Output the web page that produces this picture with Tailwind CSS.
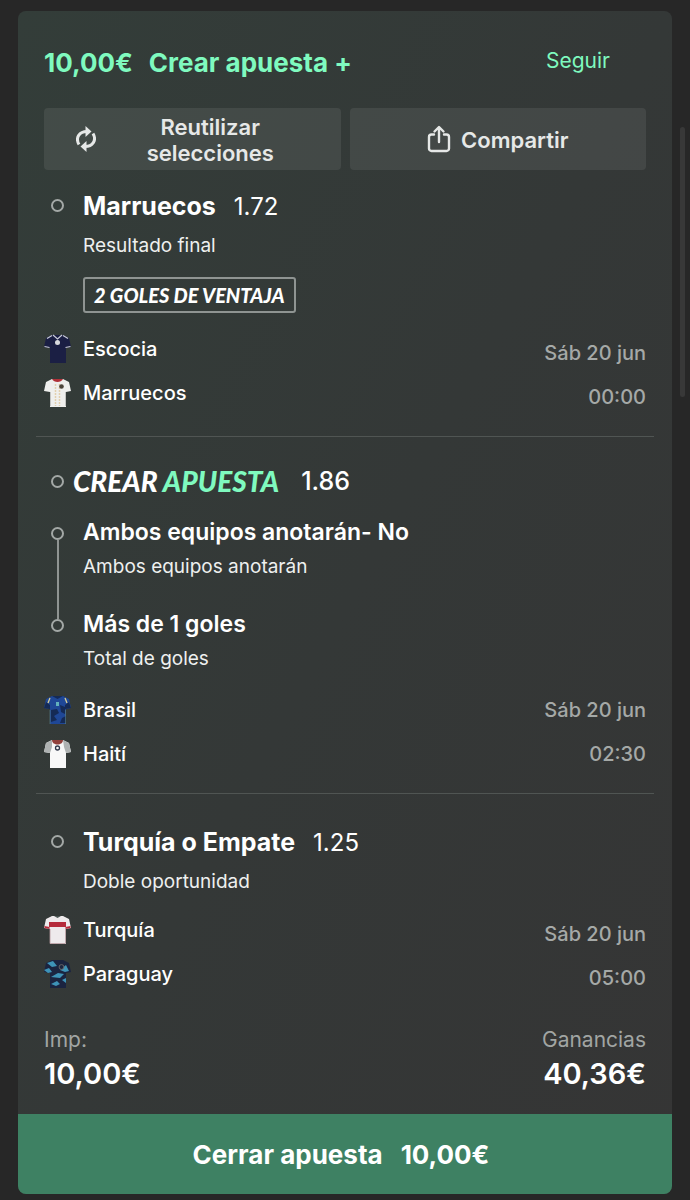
<!DOCTYPE html>
<html lang="es">
<head>
    <meta charset="UTF-8">
    <meta name="viewport" content="width=device-width, initial-scale=1.0">
    <title>Mis apuestas</title>
    <script src="https://cdn.jsdelivr.net/npm/@tailwindcss/browser@4"></script>
</head>
<body class="relative min-h-screen bg-[#272727] px-[18px] pt-[11px] pb-[6px] font-['Inter','Liberation_Sans',sans-serif] text-white">

    <!-- Scroll indicator -->
    <div class="absolute top-[127px] right-[5px] h-[270px] w-[5px] rounded-full bg-[#383838]"></div>

    <main class="overflow-hidden rounded-lg bg-linear-to-br from-[#333d39] via-[#343837] to-[#353535]">
        <div class="px-[26px]">

            <!-- Header -->
            <header class="flex h-[97px] items-center justify-between pt-[6px] pr-9">
                <h1 class="flex gap-4 text-[26px] font-bold text-[#7ffabf]"><span>10,00€</span><span>Crear apuesta +</span></h1>
                <button type="button" class="pb-1 text-[21px] text-[#7ffabf]">Seguir</button>
            </header>

            <div class="grid grid-cols-2 gap-[9px] text-[22px] leading-[26px] font-semibold text-[#e6e8e7]">
                <button type="button" class="flex h-[62px] items-center rounded bg-white/8 pr-11 pl-8">
                    <svg class="h-7 w-5 shrink-0" viewBox="0 0 20 28" fill="none" stroke="currentColor" stroke-width="3">
                        <path d="M3 19.500C-1 12.500 3.500 6.500 11 6.500"/>
                        <path d="M17 8.500C21 15.500 16.500 21.500 9 21.500"/>
                        <path d="M9.500 1l6 5.500-6 5.500z" fill="currentColor" stroke="none"/>
                        <path d="M10.500 16l-6 5.500 6 5.500z" fill="currentColor" stroke="none"/>
                    </svg>
                    <span class="flex-1 pt-[2px] pl-7">Reutilizar selecciones</span>
                </button>
                <button type="button" class="flex h-[62px] items-center justify-center gap-[10px] rounded bg-white/8">
                    <svg class="h-7 w-6" viewBox="0 0 24 28" fill="none" stroke="currentColor" stroke-width="2.400" stroke-linecap="round" stroke-linejoin="round">
                        <path d="M7 9.500H4.500a2.500 2.500 0 0 0-2.500 2.500v11.500A2.500 2.500 0 0 0 4.500 26h15a2.500 2.500 0 0 0 2.500-2.500V12a2.500 2.500 0 0 0-2.500-2.500H17"/>
                        <path d="M12 17V2.500M7.500 6.500L12 2l4.500 4.500"/>
                    </svg>
                    <span class="pt-[2px]">Compartir</span>
                </button>
            </div>

            <!-- Leg 1 -->
            <section class="pt-[19px] pb-[17px]">
                <div class="flex h-9 items-center">
                    <span class="mb-1 ml-[7px] size-[13px] rounded-full border-2 border-[#a3a8a6]"></span>
                    <h2 class="ml-[19px] text-[25px] font-bold">Marruecos</h2>
                    <span class="ml-[18px] text-[24px]">1.72</span>
                </div>
                <p class="mt-[9px] ml-[39px] text-[19px] leading-6 text-[#eef0ef]">Resultado final</p>
                <div class="mt-[19px] ml-[39px] flex h-9 w-fit items-center rounded-[3px] border-2 border-[#8f9492] px-[9px] font-['Lato_Black','Lato',sans-serif] text-[20px] font-black italic">2 GOLES DE VENTAJA</div>
                <div class="mt-[14px] flex justify-between text-[20px] font-medium">
                    <ul>
                        <li class="flex h-11 items-center gap-3">
                            <svg class="h-[30px] w-[27px]" viewBox="0 0 27 30">
                                <path d="M8 1h11l6 3 2 9-5 1v15H6V14l-6-1 2-9z" fill="#1b1f44"/>
                                <path d="M8 1.500L3 4.500M19 1.500l5 3M.5 12.500l5 1M26.500 12.500l-5 1M9 1l4.500 4L18 1" fill="none" stroke="#c9cbd8" stroke-width="1.200"/>
                                <circle cx="13.500" cy="8.500" r="2.500" fill="#d9dade"/>
                            </svg>
                            Escocia
                        </li>
                        <li class="flex h-11 items-center gap-3">
                            <svg class="h-[30px] w-[27px]" viewBox="0 0 27 30">
                                <path d="M8 1h11l6 3 2 9-5 1v15H6V14l-6-1 2-9z" fill="#efefed"/>
                                <path d="M8 1h11c-2 4-9 4-11 0z" fill="#b03038"/>
                                <path d="M11.500 6v22M15.500 6v22" stroke="#e2cfae" stroke-width="1.500" stroke-dasharray="2 1"/>
                                <path d="M6.500 14v14M21.500 14v14" stroke="#c4c4c2"/>
                                <circle cx="17.500" cy="8.500" r="2.300" fill="#4b443a"/>
                            </svg>
                            Marruecos
                        </li>
                    </ul>
                    <div class="mt-1 text-right text-[#a5a9a7]">
                        <p class="leading-[44px]">Sáb 20 jun</p>
                        <p class="leading-[44px]">00:00</p>
                    </div>
                </div>
            </section>

            <hr class="-mx-2 border-[#505553]">

            <!-- Leg 2 -->
            <section class="pt-[26px] pb-[17px]">
                <div class="flex h-9 items-center">
                    <span class="ml-[7px] size-[13px] rounded-full border-2 border-[#a3a8a6]"></span>
                    <h2 class="ml-[9px] font-['Lato_Black','Lato',sans-serif] text-[28px] font-black italic">CREAR <span class="text-[#7ffabf]">APUESTA</span></h2>
                    <span class="ml-[22px] pt-[2px] text-[25px] font-medium">1.86</span>
                </div>
                <div class="mt-[19px] flex">
                    <!-- Joined markers -->
                    <div class="ml-[7px] flex w-[13px] flex-col items-center pt-[9px] pb-[39px]">
                        <span class="size-[13px] rounded-full border-2 border-[#a3a8a6]"></span>
                        <span class="w-[2px] flex-1 bg-[#8f9492]"></span>
                        <span class="size-[13px] rounded-full border-2 border-[#a3a8a6]"></span>
                    </div>
                    <div class="ml-[19px]">
                        <h3 class="text-[23px] leading-7 font-semibold">Ambos equipos anotarán- No</h3>
                        <p class="mt-[9px] text-[19px] leading-6 text-[#eef0ef]">Ambos equipos anotarán</p>
                        <h3 class="mt-[31px] text-[23px] leading-7 font-semibold">Más de 1 goles</h3>
                        <p class="mt-[9px] text-[19px] leading-6 text-[#eef0ef]">Total de goles</p>
                    </div>
                </div>
                <div class="mt-[17px] flex justify-between text-[20px] font-medium">
                    <ul>
                        <li class="flex h-11 items-center gap-3">
                            <svg class="h-[30px] w-[27px]" viewBox="0 0 27 30">
                                <path d="M8 1h11l6 3 2 9-5 1v15H6V14l-6-1 2-9z" fill="#1f4796"/>
                                <path d="M8 1h11l-5.500 3zM0 13l2-6 4 3v4zM27 13l-2-6-4 3v4zM7 15l6-1 2 4-5 3 3 4-6 2zM16 10l5 2v7l-4-2zM18 23l4-2v7h-6z" fill="#152a55"/>
                                <path d="M6 3L4 8M21 3l2 5" stroke="#d8cf95" stroke-width="1.300"/>
                                <path d="M12 7h3v4h-3z" fill="#63b1bd"/>
                                <path d="M6 15v14M21.500 15v14" stroke="#537a83" stroke-width=".7"/>
                            </svg>
                            Brasil
                        </li>
                        <li class="flex h-11 items-center gap-3">
                            <svg class="h-[30px] w-[27px]" viewBox="0 0 27 30">
                                <path d="M8 1h11l6 3 2 9-5 1v15H6V14l-6-1 2-9z" fill="#f8f8f8"/>
                                <path d="M8 1L2 4l-2 9 6 1 2-6zM19 1l6 3 2 9-5 1-2-6z" fill="#aeb2b2"/>
                                <path d="M8 1h11c0 6-11 6-11 0z" fill="#91403b"/>
                                <circle cx="13.500" cy="9" r="2" fill="none" stroke="#30384a" stroke-width="1.300"/>
                            </svg>
                            Haití
                        </li>
                    </ul>
                    <div class="text-right text-[#a5a9a7]">
                        <p class="leading-[44px]">Sáb 20 jun</p>
                        <p class="leading-[44px]">02:30</p>
                    </div>
                </div>
            </section>

            <hr class="-mx-2 border-[#505553]">

            <!-- Leg 3 -->
            <section class="pt-[31px] pb-7">
                <div class="flex h-9 items-center">
                    <span class="mb-1 ml-[7px] size-[13px] rounded-full border-2 border-[#a3a8a6]"></span>
                    <h2 class="ml-[19px] text-[25px] font-bold">Turquía o Empate</h2>
                    <span class="ml-[18px] text-[24px]">1.25</span>
                </div>
                <p class="mt-[9px] ml-[39px] text-[19px] leading-6 text-[#eef0ef]">Doble oportunidad</p>
                <div class="mt-[14px] flex justify-between text-[20px] font-medium">
                    <ul>
                        <li class="flex h-11 items-center gap-3">
                            <svg class="h-[30px] w-[27px]" viewBox="0 0 27 30">
                                <path d="M8 1h11l6 3 2 9-5 1v15H6V14l-6-1 2-9z" fill="#eeeaec"/>
                                <path d="M5 7h17v5H5zM.5 11l5 1v2l-5-1zM26.500 11l-5 1v2l5-1z" fill="#b52b3b"/>
                                <path d="M10 1h7l-3.500 2z" fill="#4a5553"/>
                                <path d="M6 14v14.500h15.500V14" fill="none" stroke="#b4979c" stroke-width=".8"/>
                            </svg>
                            Turquía
                        </li>
                        <li class="flex h-11 items-center gap-3">
                            <svg class="h-[30px] w-[27px]" viewBox="0 0 27 30">
                                <path d="M8 1h11l6 3 2 9-5 1v15H6V14l-6-1 2-9z" fill="#1b2440"/>
                                <path d="M3 4l6-2 4 5-5 1zM0 11l5-2 3 4-4 1zM7 18l7-4 6 1-4 4zM16 11l6-5 3 6-4 1zM7 25l6-3 3 3-4 2zM18 21l4-2v5z" fill="#3e93b8"/>
                                <circle cx="17.500" cy="8" r="2.400" fill="#1b2440" stroke="#77716d" stroke-width=".8"/>
                            </svg>
                            Paraguay
                        </li>
                    </ul>
                    <div class="mt-1 text-right text-[#a5a9a7]">
                        <p class="leading-[44px]">Sáb 20 jun</p>
                        <p class="leading-[44px]">05:00</p>
                    </div>
                </div>
            </section>

            <!-- Totals -->
            <dl class="flex justify-between pb-6">
                <div>
                    <dt class="text-[21px] leading-6 text-[#a1a5a3]">Imp:</dt>
                    <dd class="mt-[6px] text-[29px] leading-8 font-semibold">10,00€</dd>
                </div>
                <div class="text-right">
                    <dt class="text-[21px] leading-6 text-[#a1a5a3]">Ganancias</dt>
                    <dd class="mt-[6px] text-[29px] leading-8 font-semibold">40,36€</dd>
                </div>
            </dl>
        </div>

        <button type="button" class="flex h-20 w-full items-center justify-center gap-[18px] bg-[#3e8163] pr-2 text-[26px] font-bold"><span>Cerrar apuesta</span><span>10,00€</span></button>
    </main>
</body>
</html>
